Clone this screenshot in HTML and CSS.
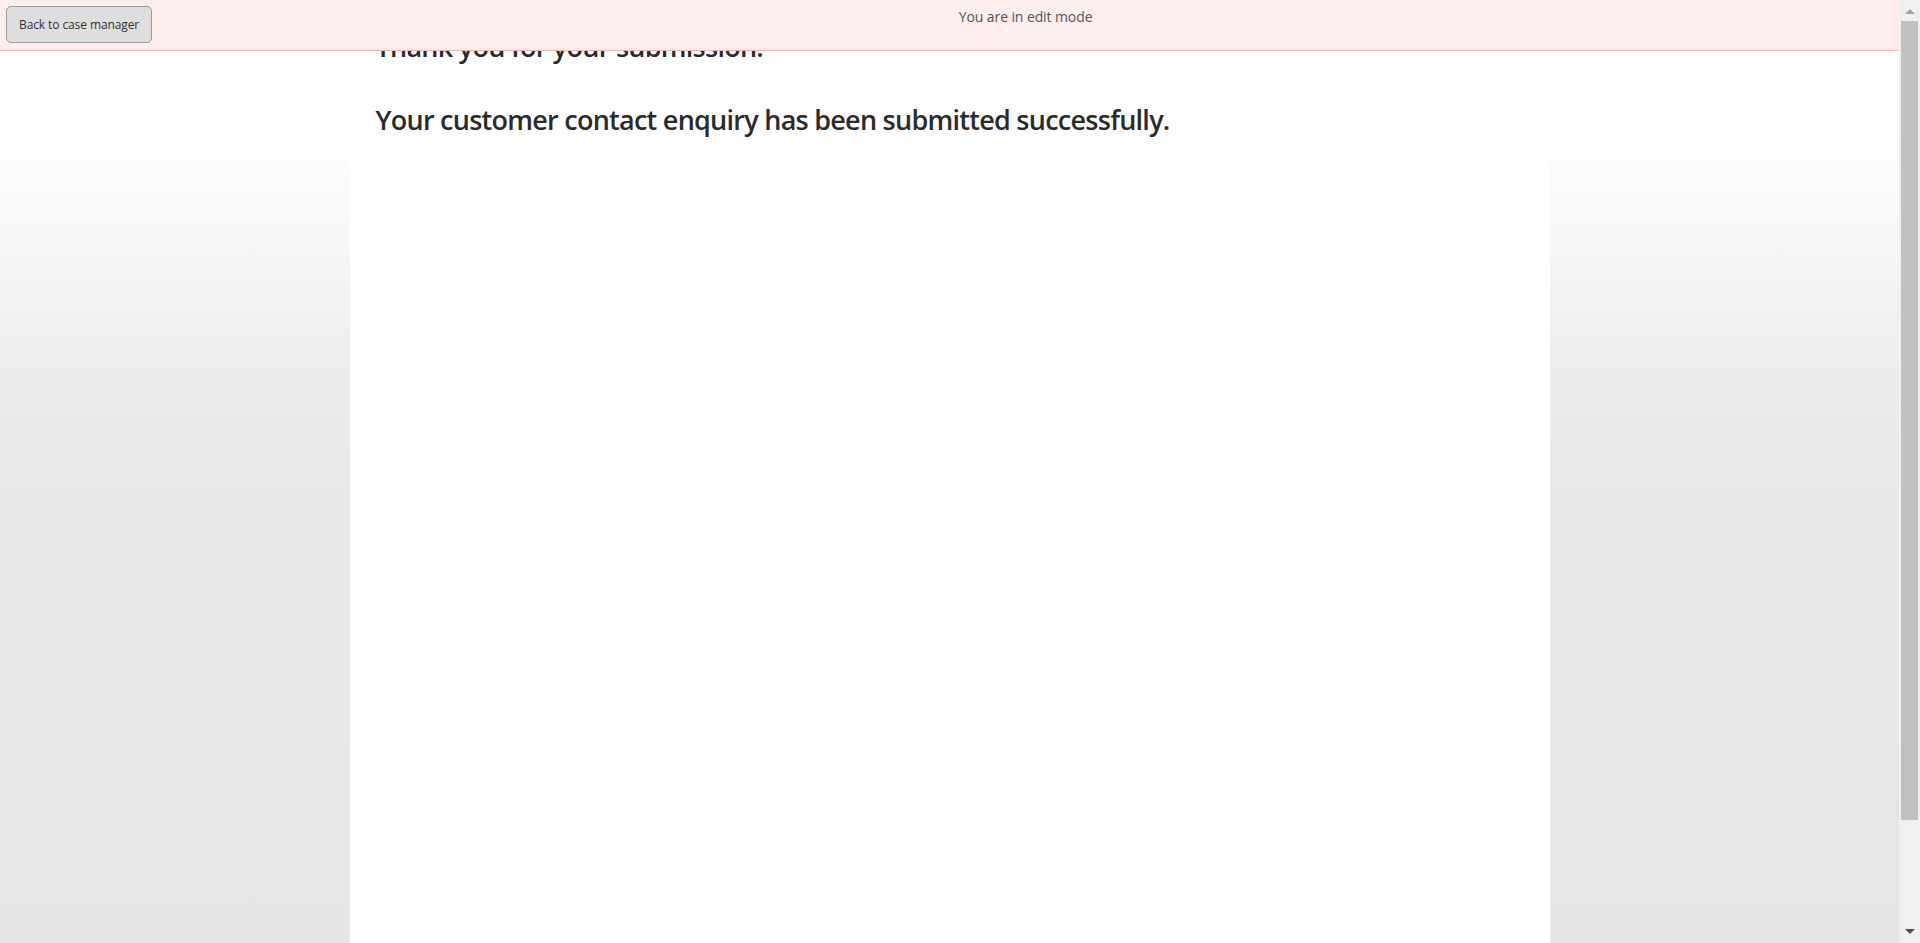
FILE: index.html
```html
<!DOCTYPE html>
<html lang="en">
<head>
<meta charset="utf-8">
<title>Submission confirmation</title>
<link rel="stylesheet" href="styles.css">
</head>
<body>
  <div class="app">
    <header class="edit-bar">
      <button class="back-btn" type="button">Back to case manager</button>
      <div class="edit-label">You are in edit mode</div>
    </header>
    <main class="page">
      <h2 class="message">Thank you for your submission.</h2>
      <h2 class="message">Your customer contact enquiry has been submitted successfully.</h2>
    </main>
  </div>
  <div class="scrollbar" aria-hidden="true">
    <span class="sb-arrow sb-up"></span>
    <span class="sb-track"><span class="sb-thumb"></span></span>
    <span class="sb-arrow sb-down"></span>
  </div>
</body>
</html>
```
FILE: styles.css
```css
html {
  background: #e8e8e9;
  overflow: hidden;
}
body {
  margin: 0;
  height: 100vh;
  display: flex;
  font-family: "Open Sans", "Noto Sans", sans-serif;
  color: #2b2b2b;
  background: linear-gradient(to bottom, #ffffff 0px, #ffffff 130px, #f6f6f6 250px, #ececed 380px, #e8e8e9 500px, #e6e6e7 100%);
}
.app {
  flex: 1;
  min-width: 0;
  position: relative;
}
.edit-bar {
  position: absolute;
  top: 0;
  left: 0;
  right: 0;
  height: 50px;
  background: #fdeded;
  border-bottom: 1px solid #f5b3b3;
  display: flex;
  align-items: flex-start;
  z-index: 10;
}
.back-btn {
  margin: 6px 0 0 6px;
  height: 37px;
  padding: 0 12px;
  background: #dedede;
  border: 1px solid #9b9b9b;
  border-radius: 5px;
  font-family: "Open Sans", "Noto Sans", sans-serif;
  font-size: 12px;
  letter-spacing: -0.1px;
  color: #333;
  cursor: pointer;
}
.edit-label {
  flex: 1;
  text-align: center;
  padding-top: 7px;
  font-size: 14px;
  line-height: 20px;
  letter-spacing: -0.1px;
  color: #555;
}
.page {
  width: 1200px;
  margin: 0 auto;
  height: 100vh;
  box-sizing: border-box;
  background: #ffffff;
  padding: 30px 26px 0;
}
.message {
  margin: 0 0 39px;
  font-size: 27px;
  line-height: 34px;
  font-weight: 600;
  letter-spacing: -0.74px;
}
.scrollbar {
  width: 21px;
  height: 100vh;
  flex: none;
  background: #f0f0f0;
  display: flex;
  flex-direction: column;
  align-items: center;
}
.sb-arrow {
  width: 0;
  height: 0;
  border-left: 5px solid transparent;
  border-right: 5px solid transparent;
}
.sb-up {
  margin: 9px 0 7px;
  border-bottom: 5px solid #a3a3a3;
}
.sb-down {
  margin: 8px 0 9px;
  border-top: 5px solid #505050;
}
.sb-track {
  flex: 1;
  align-self: stretch;
  display: flex;
  flex-direction: column;
  padding: 0 2px;
}
.sb-thumb {
  height: 799px;
  background: #c1c1c1;
}
```
